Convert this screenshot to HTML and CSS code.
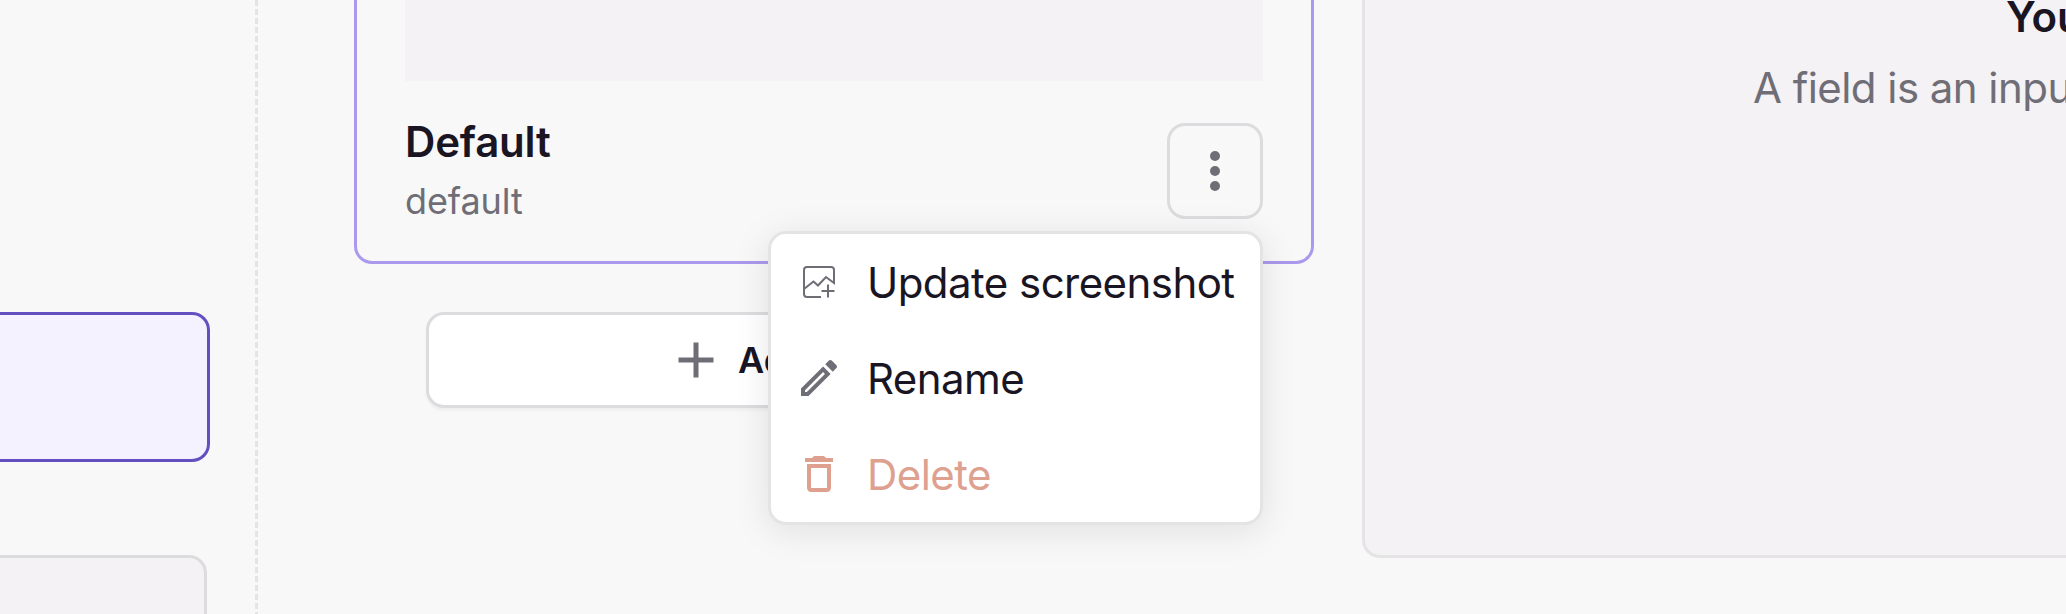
FILE: index.html
```html
<!DOCTYPE html>
<html lang="en">
<head>
<meta charset="utf-8">
<title>Component states</title>
<link rel="stylesheet" href="styles.css">
</head>
<body>

<div class="editor">

  <aside class="sidebar">
    <div class="side-item active"></div>
    <div class="side-item"></div>
  </aside>

  <main class="states">
    <div class="card">
      <div class="thumb"></div>
      <div class="card-foot">
        <div class="names">
          <strong class="title">Default</strong>
          <span class="key">default</span>
        </div>
        <div class="menu-wrap">
          <button class="kebab" aria-label="More">
            <svg viewBox="0 0 24 24" width="60" height="60"><circle cx="12" cy="6" r="2"/><circle cx="12" cy="12" r="2"/><circle cx="12" cy="18" r="2"/></svg>
          </button>
          <ul class="menu">
            <li>
              <svg class="line" viewBox="0 0 48 48" width="48" height="48"><path d="M26 39H12a3 3 0 0 1-3-3V12a3 3 0 0 1 3-3H36a3 3 0 0 1 3 3V25L31 19L23 27.500L18.500 23.500L9 31"/><path d="M33 26.500V39.500M26.500 33H39.500"/></svg>
              <span>Update screenshot</span>
            </li>
            <li>
              <svg viewBox="0 0 24 24" width="48" height="48"><path d="M14.060 9.020l.920.920L5.920 19H5v-.920l9.060-9.060M17.660 3c-.250 0-.510.100-.700.290l-1.830 1.830 3.750 3.750 1.830-1.830c.390-.390.390-1.020 0-1.410l-2.340-2.340c-.200-.200-.450-.290-.710-.290zM14.060 6.190L3 17.250V21h3.750L17.810 9.940l-3.750-3.750z"/></svg>
              <span>Rename</span>
            </li>
            <li class="danger">
              <svg viewBox="0 0 24 24" width="48" height="48"><path d="M16 9v10H8V9h8m-1.500-6h-5l-1 1H5v2h14V4h-3.500l-1-1zM18 7H6v12c0 1.100.900 2 2 2h8c1.100 0 2-.900 2-2V7z"/></svg>
              <span>Delete</span>
            </li>
          </ul>
        </div>
      </div>
    </div>
    <button class="add">
      <svg viewBox="0 0 48 48" width="48" height="48"><path d="M6.500 21.500h15V6.500h5v15h15v5h-15v15h-5v-15h-15z"/></svg>
      <span>Add</span>
    </button>
  </main>

  <section class="fields">
    <h2>You</h2>
    <p>A field is an input</p>
  </section>

</div>

</body>
</html>
```

FILE: styles.css
```css
* { box-sizing:border-box; }
body { margin:0; background:#f8f8f8; color:#1a1523; font-family:Inter, "Liberation Sans", sans-serif; font-size:42px; overflow:hidden; }
button { font:inherit; color:inherit; }
svg { display:block; flex:none; fill:#6f6e77; }

.editor { display:flex; height:614px; overflow:hidden; }

/* left column */
.sidebar { flex:none; width:255px; padding-top:312px; }
.side-item { width:207px; height:150px; border:3px solid #dcdbdd; border-left:0; border-radius:0 18px 18px 0; background:#f4f2f4; }
.side-item.active { width:210px; margin-bottom:93px; border-color:#644fc1; background:#f5f2ff; }

/* states */
.states { flex:none; width:1107px; padding:0 48px 0 99px; background:repeating-linear-gradient(#e4e4e4 0 6px, transparent 6px 9px) 0 0 / 3px 100% no-repeat; }
.card { height:264px; padding:0 48px; border:3px solid #aa99ec; border-top:0; border-radius:0 0 18px 18px; }
.thumb { height:81px; background:#f4f2f4; }
.card-foot { display:flex; justify-content:space-between; padding-top:29px; }
.names { display:flex; flex-direction:column; }
.title { font-weight:600; line-height:63px; letter-spacing:-.2px; }
.key { padding-top:1px; color:#6f6e77; font-size:36px; line-height:54px; letter-spacing:-.1px; }
.menu-wrap { position:relative; padding-top:13px; }
.kebab { display:flex; align-items:center; justify-content:center; width:96px; height:96px; padding:0; border:3px solid #dcdbdd; border-radius:18px; background:none; }

.menu { position:absolute; top:121px; right:0; z-index:2; width:495px; margin:0; padding:0; list-style:none; border:3px solid #e4e4e4; border-radius:18px; background:#fff; box-shadow:0 6px 36px rgba(26,21,35,.1); }
.menu li { display:flex; align-items:center; gap:24px; height:96px; padding-left:24px; white-space:nowrap; letter-spacing:-.55px; }
.menu .line { fill:none; stroke:#6f6e77; stroke-width:2; }
.danger { color:#dea190; }
.danger svg { fill:#dea190; }

.add { display:flex; align-items:center; gap:18px; width:816px; height:96px; margin:48px 0 0 72px; padding:0 0 0 243px; border:3px solid #dcdbdd; border-radius:18px; background:#fff; box-shadow:0 3px 3px rgba(26,21,35,.04); font-size:36px; font-weight:600; }

/* right panel */
.fields { flex:none; width:704px; height:558px; border:3px solid #e4e4e4; border-width:0 0 3px 3px; border-radius:0 0 0 18px; background:#f4f2f4; overflow:hidden; white-space:nowrap; }
.fields h2 { margin:-15px 0 0 641px; font-size:42px; font-weight:600; line-height:63px; letter-spacing:-.2px; }
.fields p { margin:8px 0 0 388px; color:#6f6e77; line-height:63px; letter-spacing:-.55px; }
```
